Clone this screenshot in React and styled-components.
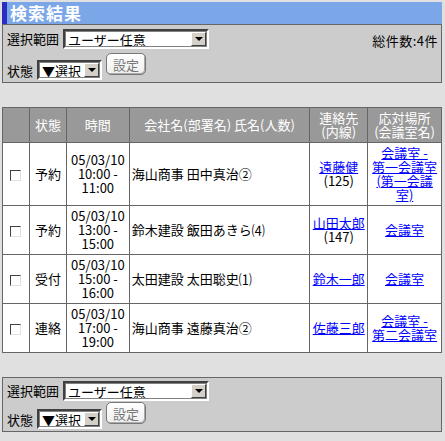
import React from "react";
import styled, { createGlobalStyle } from "styled-components";

const GlobalStyle = createGlobalStyle`
  html, body {
    margin: 0;
    background: #e0e0e0;
  }
  body {
    padding: 2px 3px 0 2px;
    font-family: "Noto Sans CJK JP", "Liberation Sans", sans-serif;
    font-size: 13px;
    color: #000;
  }
`;

const Page = styled.div`
  width: 440px;
`;

const TitleBar = styled.div`
  height: 22px;
  background: #7ba6e8;
  border-left: 5px solid #2a2fc0;
  color: #fff;
  font-weight: bold;
  font-size: 17px;
  line-height: 22px;
  padding-left: 3px;
  letter-spacing: 1px;
`;

const Panel = styled.div`
  background: #cccccc;
  border: 1px solid #666;
  padding: 3px 3px 2px 4px;
  display: flex;
  flex-direction: column;
  gap: ${(p) => (p.$compact ? "1px" : "3px")};
`;

const Row = styled.div`
  display: flex;
  align-items: ${(p) => p.$align || "center"};
  gap: 4px;
`;

const Label = styled.span`
  line-height: 18px;
  white-space: nowrap;
`;

const Total = styled.span`
  margin-left: auto;
  align-self: flex-start;
  margin-top: 3px;
  letter-spacing: 0.5px;
`;

const Select = styled.div`
  width: ${(p) => p.$w}px;
  height: 20px;
  box-sizing: border-box;
  background: #fff;
  border: 2px solid;
  border-color: #404040 #fff #fff #404040;
  outline: 1px solid #808080;
  outline-offset: -3px;
  display: flex;
  align-items: center;
  padding-left: 3px;
  font-size: 13px;
`;

const SelectText = styled.span`
  flex: 1;
  white-space: nowrap;
`;

const DropButton = styled.span`
  width: 15px;
  height: 14px;
  margin-right: 1px;
  box-sizing: border-box;
  background: #d4d0c8;
  border: 1px solid;
  border-color: #fff #404040 #404040 #fff;
  display: flex;
  align-items: center;
  justify-content: center;
  &::after {
    content: "";
    border-left: 4px solid transparent;
    border-right: 4px solid transparent;
    border-top: 4px solid #000;
  }
`;

const Button = styled.button`
  width: 40px;
  height: 22px;
  margin-bottom: 5px;
  border: 1px solid #777;
  border-radius: 5px;
  background: linear-gradient(#ffffff, #eeeeee);
  box-shadow: inset -1px -1px 0 #aaa;
  color: #777;
  font-family: inherit;
  font-size: 13px;
  padding: 0;
`;

const Gap = styled.div`
  height: ${(p) => p.$h}px;
`;

const Table = styled.table`
  width: 440px;
  border-collapse: collapse;
  background: #fff;
  border: 1px solid #666;
  line-height: 14px;
  td,
  th {
    border: 1px solid #666;
    padding: 3px 2px;
    text-align: center;
    vertical-align: middle;
  }
`;

const Th = styled.th`
  background: #999999;
  color: #fff;
  font-weight: normal;
  height: 28px;
`;

const Td = styled.td`
  &&& {
    text-align: ${(p) => (p.$left ? "left" : "center")};
  }
  white-space: ${(p) => (p.$nowrap ? "nowrap" : "normal")};
`;

const Check = styled.span`
  display: inline-block;
  width: 11px;
  height: 11px;
  box-sizing: border-box;
  border: 1px solid;
  border-color: #404040 #e0e0e0 #e0e0e0 #404040;
  background: #fff;
  vertical-align: middle;
`;

const Link = styled.a`
  color: #0000ff;
  text-decoration: underline;
`;

const rows = [
  {
    status: "予約",
    time: ["05/03/10", "10:00 -", "11:00"],
    name: "海山商事 田中真治②",
    contact: "遠藤健",
    ext: "(125)",
    place: ["会議室 -", "第一会議室", "(第一会議", "室)"],
  },
  {
    status: "予約",
    time: ["05/03/10", "13:00 -", "15:00"],
    name: "鈴木建設 飯田あきら⑷",
    contact: "山田太郎",
    ext: "(147)",
    place: ["会議室"],
  },
  {
    status: "受付",
    time: ["05/03/10", "15:00 -", "16:00"],
    name: "太田建設 太田聡史⑴",
    contact: "鈴木一郎",
    place: ["会議室"],
  },
  {
    status: "連絡",
    time: ["05/03/10", "17:00 -", "19:00"],
    name: "海山商事 遠藤真治②",
    contact: "佐藤三郎",
    place: ["会議室 -", "第二会議室"],
  },
];

function Controls({ total }) {
  return (
    <Panel $compact={!total}>
      <Row>
        <Label>選択範囲</Label>
        <Select $w={146}>
          <SelectText>ユーザー任意</SelectText>
          <DropButton />
        </Select>
        {total && <Total>総件数:4件</Total>}
      </Row>
      <Row $align="flex-end">
        <Label>状態</Label>
        <Select $w={65}>
          <SelectText>▼選択</SelectText>
          <DropButton />
        </Select>
        <Button>設定</Button>
      </Row>
    </Panel>
  );
}

export default function App() {
  return (
    <Page>
      <GlobalStyle />
      <TitleBar>検索結果</TitleBar>
      <Controls total />
      <Gap $h={24} />
      <Table>
        <colgroup>
          <col style={{ width: 27 }} />
          <col style={{ width: 37 }} />
          <col style={{ width: 63 }} />
          <col style={{ width: 181 }} />
          <col style={{ width: 58 }} />
          <col style={{ width: 74 }} />
        </colgroup>
        <thead>
          <tr>
            <Th></Th>
            <Th>状態</Th>
            <Th>時間</Th>
            <Th>会社名(部署名) 氏名(人数)</Th>
            <Th>
              連絡先
              <br />
              (内線)
            </Th>
            <Th>
              応対場所
              <br />
              (会議室名)
            </Th>
          </tr>
        </thead>
        <tbody>
          {rows.map((r, i) => (
            <tr key={i}>
              <Td>
                <Check />
              </Td>
              <Td>{r.status}</Td>
              <Td $nowrap>
                {r.time.map((t, j) => (
                  <div key={j}>{t}</div>
                ))}
              </Td>
              <Td $left>{r.name}</Td>
              <Td>
                <Link href="#">{r.contact}</Link>
                {r.ext && <div>{r.ext}</div>}
              </Td>
              <Td>
                <Link href="#">
                  {r.place.map((p, j) => (
                    <React.Fragment key={j}>
                      {j > 0 && <br />}
                      {p}
                    </React.Fragment>
                  ))}
                </Link>
              </Td>
            </tr>
          ))}
        </tbody>
      </Table>
      <Gap $h={24} />
      <Controls />
    </Page>
  );
}
